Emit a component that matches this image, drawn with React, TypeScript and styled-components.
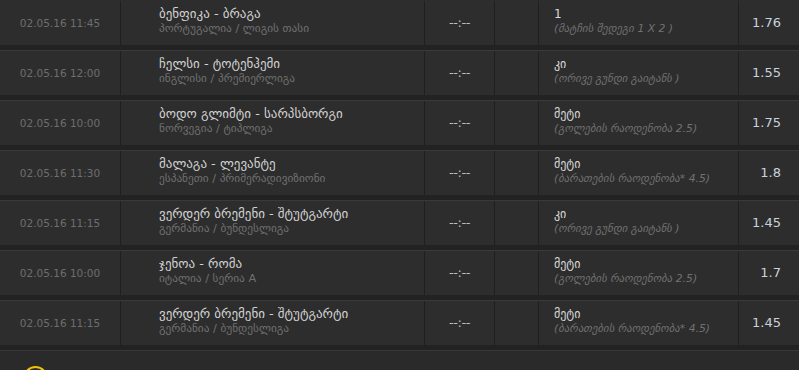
import React from "react";
import styled, { createGlobalStyle } from "styled-components";

const Global = createGlobalStyle`
  html, body { margin: 0; padding: 0; background: #222222; }
  body { font-family: "DejaVu Sans", "Noto Sans", sans-serif; overflow: hidden; }
`;

const List = styled.div`
  display: flex;
  flex-direction: column;
  gap: 5px;
  width: 799px;
`;

const Row = styled.div<{ $first?: boolean }>`
  display: grid;
  grid-template-columns: 120px 304px 70px 44px 200px 1fr;
  height: 45px;
  background: #2d2d2d;
  border-top: 1px solid ${(p) => (p.$first ? "#2d2d2d" : "#3a3a3a")};
  box-sizing: border-box;
`;

const Cell = styled.div<{ $align?: string; $first?: boolean }>`
  display: flex;
  flex-direction: column;
  justify-content: center;
  align-items: ${(p) => p.$align || "flex-start"};
  border-left: ${(p) => (p.$first ? "none" : "1px solid #1f1f1f")};
  box-sizing: border-box;
  min-width: 0;
`;

const Time = styled.span`
  font-size: 10.5px;
  color: #6e6e6e;
  margin-top: -1px;
`;

const MatchCell = styled(Cell)`
  padding-left: 38px;
  justify-content: flex-start;
  padding-top: 4px;
`;

const Title = styled.span`
  font-size: 13px;
  color: #d2d2d2;
  line-height: 17px;
  white-space: nowrap;
`;

const Sub = styled.span`
  font-size: 11.3px;
  color: #707070;
  line-height: 14px;
  white-space: nowrap;
`;

const Score = styled.span`
  font-size: 13px;
  color: #bdbdbd;
  letter-spacing: -0.4px;
  margin-top: -2px;
`;

const PickCell = styled(Cell)`
  padding-left: 15px;
  justify-content: flex-start;
  padding-top: 5px;
`;

const PickName = styled.span`
  font-size: 12px;
  color: #d8d8d8;
  line-height: 16px;
`;

const PickSub = styled.span`
  font-size: 10.8px;
  font-style: italic;
  color: #717171;
  line-height: 14px;
  white-space: nowrap;
`;

const OddsCell = styled(Cell)`
  padding-right: 18px;
`;

const Odds = styled.span`
  font-size: 13px;
  color: #c9d2dc;
  margin-top: -2px;
`;

const Footer = styled.div`
  margin-top: 5px;
  height: 40px;
  background: #2a2a2a;
  border-top: 1px solid #383838;
  padding: 15px 0 0 23px;
  box-sizing: border-box;
`;

const Badge = styled.div`
  width: 25px;
  height: 25px;
  border-radius: 50%;
  border: 2px solid #f2c200;
  box-sizing: border-box;
`;

type Bet = {
  time: string;
  title: string;
  league: string;
  pick: string;
  market: string;
  odds: string;
};

const bets: Bet[] = [
  { time: "02.05.16 11:45", title: "ბენფიკა - ბრაგა", league: "პორტუგალია / ლიგის თასი", pick: "1", market: "(მატჩის შედეგი 1 X 2 )", odds: "1.76" },
  { time: "02.05.16 12:00", title: "ჩელსი - ტოტენჰემი", league: "ინგლისი / პრემიერლიგა", pick: "კი", market: "(ორივე გუნდი გაიტანს )", odds: "1.55" },
  { time: "02.05.16 10:00", title: "ბოდო გლიმტი - სარპსბორგი", league: "ნორვეგია / ტიპლიგა", pick: "მეტი", market: "(გოლების რაოდენობა 2.5)", odds: "1.75" },
  { time: "02.05.16 11:30", title: "მალაგა - ლევანტე", league: "ესპანეთი / პრიმერადივიზიონი", pick: "მეტი", market: "(ბარათების რაოდენობა* 4.5)", odds: "1.8" },
  { time: "02.05.16 11:15", title: "ვერდერ ბრემენი - შტუტგარტი", league: "გერმანია / ბუნდესლიგა", pick: "კი", market: "(ორივე გუნდი გაიტანს )", odds: "1.45" },
  { time: "02.05.16 10:00", title: "ჯენოა - რომა", league: "იტალია / სერია A", pick: "მეტი", market: "(გოლების რაოდენობა 2.5)", odds: "1.7" },
  { time: "02.05.16 11:15", title: "ვერდერ ბრემენი - შტუტგარტი", league: "გერმანია / ბუნდესლიგა", pick: "მეტი", market: "(ბარათების რაოდენობა* 4.5)", odds: "1.45" },
];

export default function App() {
  return (
    <>
      <Global />
      <List>
        {bets.map((b, i) => (
          <Row key={i} $first={i === 0}>
            <Cell $first $align="center">
              <Time>{b.time}</Time>
            </Cell>
            <MatchCell>
              <Title>{b.title}</Title>
              <Sub>{b.league}</Sub>
            </MatchCell>
            <Cell $align="center">
              <Score>--:--</Score>
            </Cell>
            <Cell />
            <PickCell>
              <PickName>{b.pick}</PickName>
              <PickSub>{b.market}</PickSub>
            </PickCell>
            <OddsCell $align="flex-end">
              <Odds>{b.odds}</Odds>
            </OddsCell>
          </Row>
        ))}
      </List>
      <Footer>
        <Badge />
      </Footer>
    </>
  );
}
